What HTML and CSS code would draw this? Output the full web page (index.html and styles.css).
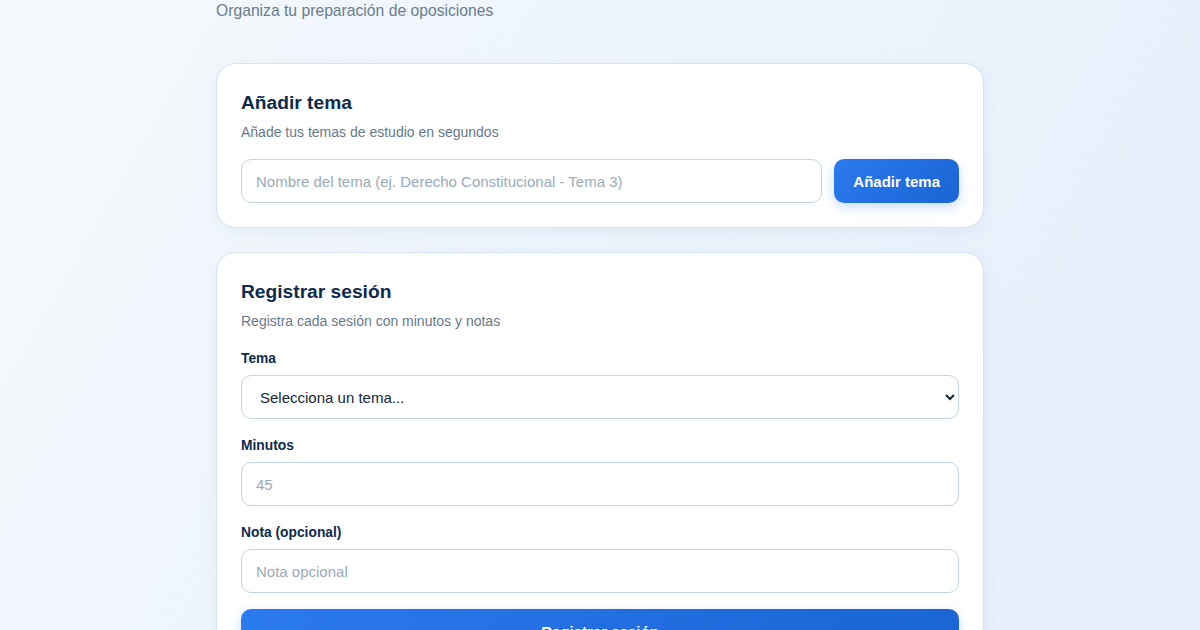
FILE: index.html
```html
<!DOCTYPE html>
<html lang="es">
<head>
<meta charset="utf-8">
<title>Oposiciones</title>
<link rel="stylesheet" href="styles.css">
</head>
<body>
<main class="wrap">
  <p class="lead">Organiza tu preparación de oposiciones</p>

  <section class="card">
    <h2 class="card-title">Añadir tema</h2>
    <p class="card-sub">Añade tus temas de estudio en segundos</p>
    <div class="row">
      <input class="field grow" type="text" placeholder="Nombre del tema (ej. Derecho Constitucional - Tema 3)">
      <button class="btn">Añadir tema</button>
    </div>
  </section>

  <section class="card">
    <h2 class="card-title">Registrar sesión</h2>
    <p class="card-sub">Registra cada sesión con minutos y notas</p>
    <label class="label first">Tema</label>
    <select class="field select">
      <option>Selecciona un tema...</option>
    </select>
    <label class="label">Minutos</label>
    <input class="field" type="text" placeholder="45">
    <label class="label">Nota (opcional)</label>
    <input class="field" type="text" placeholder="Nota opcional">
    <button class="btn block">Registrar sesión</button>
  </section>
</main>
</body>
</html>
```

FILE: styles.css
```css
* { box-sizing: border-box; }
html, body { margin: 0; padding: 0; }
body {
  font-family: "Liberation Sans", Arial, sans-serif;
  background: linear-gradient(120deg, #f6f9fd 0%, #edf4fc 45%, #e4eefa 100%);
  min-height: 100vh;
  color: #0f2b4c;
}
.wrap {
  width: 768px;
  margin: 0 auto;
  padding-top: 1px;
}
.lead {
  margin: 0 0 42px;
  font-size: 15.7px;
  line-height: 20px;
  color: #6b7c8f;
}
.card {
  background: #fff;
  border: 1px solid #d5e3ef;
  border-radius: 20px;
  padding: 24px;
  box-shadow: 0 4px 16px rgba(60, 110, 170, 0.08);
  margin-bottom: 24px;
  display: flex;
  flex-direction: column;
}
.card-title {
  margin: 0;
  font-size: 19.2px;
  line-height: 30px;
  font-weight: 700;
  color: #0d2b4d;
}
.card-sub {
  margin: 4px 0 17px;
  font-size: 14px;
  line-height: 20px;
  color: #66788c;
}
.row {
  display: flex;
  gap: 12px;
}
.grow { flex: 1; }
.field {
  height: 44px;
  border: 1px solid #c3d4e2;
  border-radius: 10px;
  padding: 0 14px;
  font-family: "Liberation Sans", Arial, sans-serif;
  font-size: 15px;
  color: #0f2b4c;
  background: #fff;
  outline: none;
}
.field::placeholder { color: #9aaabb; }
.select {
  padding-left: 14px;
  color: #15273b;
}
.label {
  display: block;
  margin: 17px 0 6px;
  font-size: 13.8px;
  line-height: 20px;
  font-weight: 700;
  color: #0f2b4c;
}
.label.first { margin-top: 1px; }
.btn {
  height: 44px;
  padding: 0 19px;
  border: none;
  border-radius: 10px;
  background: linear-gradient(135deg, #2b7aee 0%, #1a64d4 100%);
  color: #fff;
  font-family: "Liberation Sans", Arial, sans-serif;
  font-size: 15px;
  font-weight: 700;
  box-shadow: 0 4px 12px rgba(37, 110, 230, 0.25);
  cursor: pointer;
}
.btn.block {
  width: 100%;
  margin-top: 16px;
}
```
